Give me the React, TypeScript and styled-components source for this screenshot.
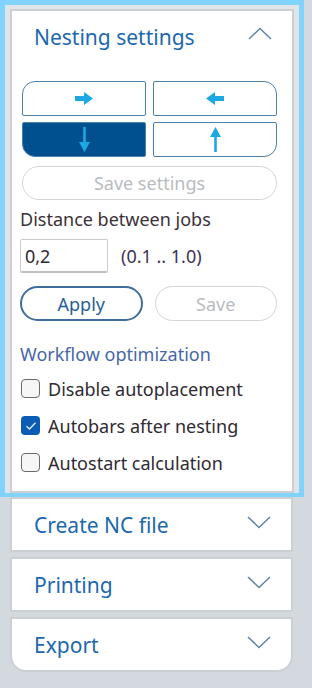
import React, { useState } from "react";
import styled, { createGlobalStyle } from "styled-components";

const GlobalStyle = createGlobalStyle`
  html, body {
    margin: 0;
    padding: 0;
    background: #d3d9df;
  }
  body {
    font-family: "Noto Sans", "Open Sans", sans-serif;
  }
`;

const Page = styled.div`
  width: 312px;
  height: 688px;
  padding-left: 10px;
  box-sizing: border-box;
`;

const Column = styled.div`
  width: 283px;
  display: flex;
  flex-direction: column;
  gap: 5px;
`;

const Focus = styled.div`
  margin: 0 -11px -5px -10px;
  border: 5px solid #82d3fb;
  border-bottom-width: 4px;
  padding: 4px 5px 0 5px;
  background: #dfe4e8;
`;

const Section = styled.div<{ $last?: boolean }>`
  background: #fff;
  border: 2px solid #cbd0d5;
  border-radius: ${(p) => (p.$last ? "0 0 16px 16px" : "0")};
`;

const Header = styled.div<{ $h: number; $lift: number }>`
  height: ${(p) => p.$h}px;
  display: flex;
  align-items: center;
  justify-content: space-between;
  padding: 0 20px ${(p) => p.$lift}px 22px;
  box-sizing: border-box;
`;

const Title = styled.span`
  font-size: 21px;
  color: #2068ae;
`;

const ChevronWrap = styled.span<{ $lift: number }>`
  display: flex;
  margin-bottom: ${(p) => p.$lift}px;
`;

const Body = styled.div`
  padding: 12px 15px 10px 8px;
`;

const DirGrid = styled.div`
  display: grid;
  grid-template-columns: 1fr 1fr;
  gap: 6px 7px;
  padding-left: 2px;
`;

const DirBtn = styled.button<{ $active?: boolean; $r: string }>`
  height: 35px;
  border: 1.5px solid #4f7fab;
  border-radius: ${(p) => p.$r};
  background: ${(p) => (p.$active ? "#004f8e" : "#fff")};
  display: flex;
  align-items: center;
  justify-content: center;
  padding: 0;
`;

const PillBtn = styled.button<{ $primary?: boolean }>`
  height: 35px;
  border-radius: 18px;
  border: ${(p) => (p.$primary ? "2px solid #3f6e9c" : "1.5px solid #d3d6d9")};
  background: #fff;
  color: ${(p) => (p.$primary ? "#245f99" : "#b9bcbf")};
  font-family: "Noto Sans", "Open Sans", sans-serif;
  font-size: 18px;
  padding: 0;
`;

const SaveSettings = styled(PillBtn)`
  width: calc(100% - 2px);
  margin: 9px 0 0 2px;
  height: 34px;
`;

const Label = styled.div<{ $blue?: boolean; $mt: number }>`
  margin-top: ${(p) => p.$mt}px;
  line-height: 22px;
  font-size: 18px;
  color: ${(p) => (p.$blue ? "#4767a8" : "#3a3238")};
`;

const InputRow = styled.div`
  display: flex;
  align-items: center;
  gap: 13px;
  margin-top: 9px;
`;

const Field = styled.input`
  width: 88px;
  height: 34px;
  box-sizing: border-box;
  border: 1px solid #c9cdd1;
  border-bottom: 2px solid #bfc3c7;
  border-radius: 2px;
  padding: 0 4px;
  font-family: "Noto Sans", "Open Sans", sans-serif;
  font-size: 18px;
  color: #2d2a33;
  outline: none;
`;

const Range = styled.span`
  font-size: 18px;
  color: #3d3358;
`;

const ButtonRow = styled.div`
  display: grid;
  grid-template-columns: 1fr 1fr;
  gap: 12px;
  margin-top: 13px;
`;

const CheckList = styled.div`
  margin-top: 5px;
`;

const CheckRow = styled.label`
  height: 37px;
  display: flex;
  align-items: center;
  gap: 8px;
  padding-left: 1px;
  font-size: 18px;
  color: #2f2a33;
`;

const Box = styled.span<{ $on: boolean }>`
  width: 19px;
  height: 19px;
  box-sizing: border-box;
  border-radius: 4px;
  border: ${(p) => (p.$on ? "none" : "1.5px solid #6b6b6b")};
  background: ${(p) => (p.$on ? "#0b5db4" : "#f6f6f6")};
  display: flex;
  align-items: center;
  justify-content: center;
`;

const Chevron = ({ up }: { up?: boolean }) => (
  <svg width="24" height="13" viewBox="0 0 24 13">
    <path
      d={up ? "M1 12 L12 1.5 L23 12" : "M1 1 L12 11.5 L23 1"}
      fill="none"
      stroke="#5f84ab"
      strokeWidth="1.5"
    />
  </svg>
);

const ArrowH = ({ left }: { left?: boolean }) => (
  <svg width="18" height="13" viewBox="0 0 18 13" style={{ transform: left ? "scaleX(-1)" : undefined }}>
    <path d="M0 4 H9 V0 L18 6.5 L9 13 V9 H0 Z" fill="#1ba8e3" />
  </svg>
);

const ArrowV = ({ up }: { up?: boolean }) => (
  <svg width="11" height="25" viewBox="0 0 11 25" style={{ transform: up ? "scaleY(-1)" : undefined }}>
    <path d="M4.2 0 H6.8 V15 H11 L5.5 25 L0 15 H4.2 Z" fill="#1ba8e3" />
  </svg>
);

const Check = () => (
  <svg width="12" height="10" viewBox="0 0 12 10">
    <path d="M1.5 5.2 L4.5 8 L10.5 1.8" fill="none" stroke="#dce9f7" strokeWidth="1.4" />
  </svg>
);

export default function App() {
  const [dir, setDir] = useState(2);
  const [distance, setDistance] = useState("0,2");
  const [checks, setChecks] = useState([false, true, false]);
  const labels = ["Disable autoplacement", "Autobars after nesting", "Autostart calculation"];
  const radii = ["13px 2px 2px 2px", "2px 13px 2px 2px", "2px 2px 2px 13px", "2px 2px 13px 2px"];

  return (
    <Page>
      <GlobalStyle />
      <Column>
        <Focus>
          <Section>
            <Header $h={58} $lift={6}>
              <Title>Nesting settings</Title>
              <ChevronWrap $lift={8}>
                <Chevron up />
              </ChevronWrap>
            </Header>
            <Body>
              <DirGrid>
                {radii.map((r, i) => (
                  <DirBtn key={i} $r={r} $active={dir === i} onClick={() => setDir(i)}>
                    {i === 0 && <ArrowH />}
                    {i === 1 && <ArrowH left />}
                    {i === 2 && <ArrowV />}
                    {i === 3 && <ArrowV up />}
                  </DirBtn>
                ))}
              </DirGrid>
              <SaveSettings>Save settings</SaveSettings>
              <Label $mt={8}>Distance between jobs</Label>
              <InputRow>
                <Field value={distance} onChange={(e) => setDistance(e.target.value)} />
                <Range>(0.1 .. 1.0)</Range>
              </InputRow>
              <ButtonRow>
                <PillBtn $primary>Apply</PillBtn>
                <PillBtn>Save</PillBtn>
              </ButtonRow>
              <Label $blue $mt={22}>Workflow optimization</Label>
              <CheckList>
                {labels.map((l, i) => (
                  <CheckRow
                    key={l}
                    onClick={() => setChecks(checks.map((c, j) => (j === i ? !c : c)))}
                  >
                    <Box $on={checks[i]}>{checks[i] && <Check />}</Box>
                    {l}
                  </CheckRow>
                ))}
              </CheckList>
            </Body>
          </Section>
        </Focus>
        {["Create NC file", "Printing", "Export"].map((t, i) => (
          <Section key={t} $last={i === 2}>
            <Header $h={51} $lift={0}>
              <Title>{t}</Title>
              <ChevronWrap $lift={4}>
                <Chevron />
              </ChevronWrap>
            </Header>
          </Section>
        ))}
      </Column>
    </Page>
  );
}
